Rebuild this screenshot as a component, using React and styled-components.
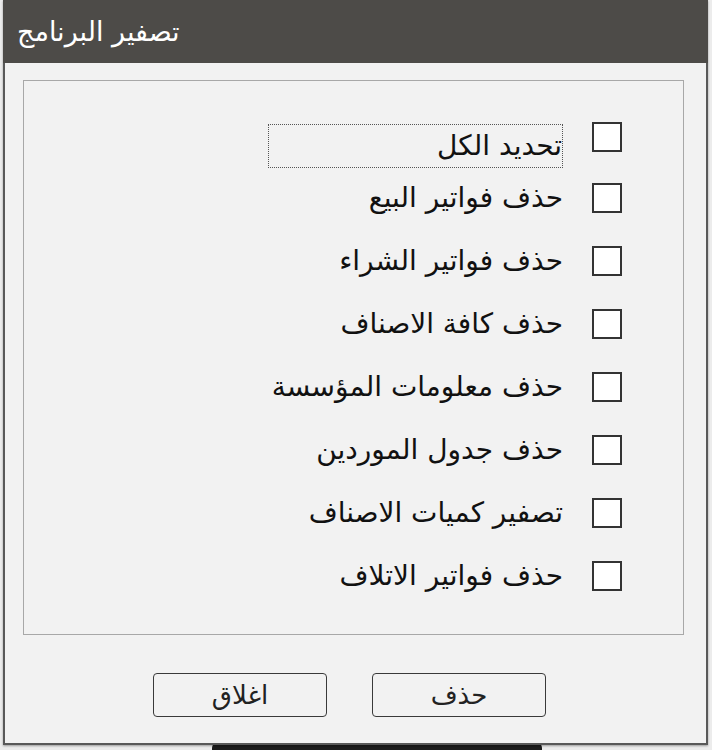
import React from 'react'
import styled, { createGlobalStyle } from 'styled-components'

const GlobalStyle = createGlobalStyle`
    html, body {
        margin: 0;
        padding: 0;
        background: #ececec;
        overflow: hidden;
    }
    body {
        font-family: "DejaVu Sans", "Noto Sans", sans-serif;
    }
`

const Page = styled.div`
    position: relative;
    width: 712px;
    height: 750px;
`

const Backdrop = styled.div`
    position: absolute;
    left: 212px;
    bottom: 0;
    width: 330px;
    height: 8px;
    background: #1c1c1c;
    border-radius: 6px 6px 0 0;
`

const Window = styled.div`
    position: relative;
    margin-left: 3px;
    width: 701px;
    height: 743px;
    border: 2px solid #595959;
    border-top: none;
    background: #f2f2f2;
    display: flex;
    flex-direction: column;
    box-shadow: 0 1px 2px rgba(0, 0, 0, 0.35);
`

const TitleBar = styled.header`
    height: 63px;
    flex-shrink: 0;
    background: #4d4b48;
    color: #ffffff;
    font-size: 27px;
    display: flex;
    align-items: center;
    padding-left: 14px;
    margin: 0 -2px;
    box-sizing: border-box;
`

const Body = styled.section`
    flex: 1;
    display: flex;
    flex-direction: column;
    padding: 17px 22px 0 18px;
`

const Group = styled.div`
    height: 555px;
    border: 1px solid #a8a8a8;
    box-sizing: border-box;
    padding: 27px 61px 0 0;
    display: flex;
    flex-direction: column;
`

const Row = styled.label`
    height: ${props => props.$first ? 58 : 63}px;
    display: flex;
    flex-direction: row-reverse;
    align-items: center;
    gap: 29px;
`

const Box = styled.span`
    width: 26px;
    height: 26px;
    flex-shrink: 0;
    background: #ffffff;
    border: 2px solid #333333;
`

const Label = styled.span`
    font-size: 28px;
    color: #111111;
    direction: rtl;
    text-align: right;
    line-height: 42px;
    ${props => props.$focused && `
        width: 293px;
        border: 1px dotted #555555;
        margin-top: 17px;
    `}
`

const Buttons = styled.div`
    display: flex;
    gap: 45px;
    padding: 38px 0 0 130px;
`

const Button = styled.button`
    width: 174px;
    height: 44px;
    background: #f2f2f2;
    border: 1px solid #3a3a3a;
    border-radius: 4px;
    font-family: inherit;
    font-size: 26px;
    color: #222222;
    padding: 0;
`

const options = [
    'تحديد الكل',
    'حذف فواتير البيع',
    'حذف فواتير الشراء',
    'حذف كافة الاصناف',
    'حذف معلومات المؤسسة',
    'حذف جدول الموردين',
    'تصفير كميات الاصناف',
    'حذف فواتير الاتلاف',
]

export default function App() {
    return (
        <Page>
            <GlobalStyle />
            <Backdrop />
            <Window>
                <TitleBar>تصفير البرنامج</TitleBar>
                <Body>
                    <Group>
                        {
                            options.map((text, i) => (
                                <Row key={text} $first={i === 0}>
                                    <Box />
                                    <Label $focused={i === 0}>{text}</Label>
                                </Row>
                            ))
                        }
                    </Group>
                    <Buttons>
                        <Button>اغلاق</Button>
                        <Button>حذف</Button>
                    </Buttons>
                </Body>
            </Window>
        </Page>
    )
}
